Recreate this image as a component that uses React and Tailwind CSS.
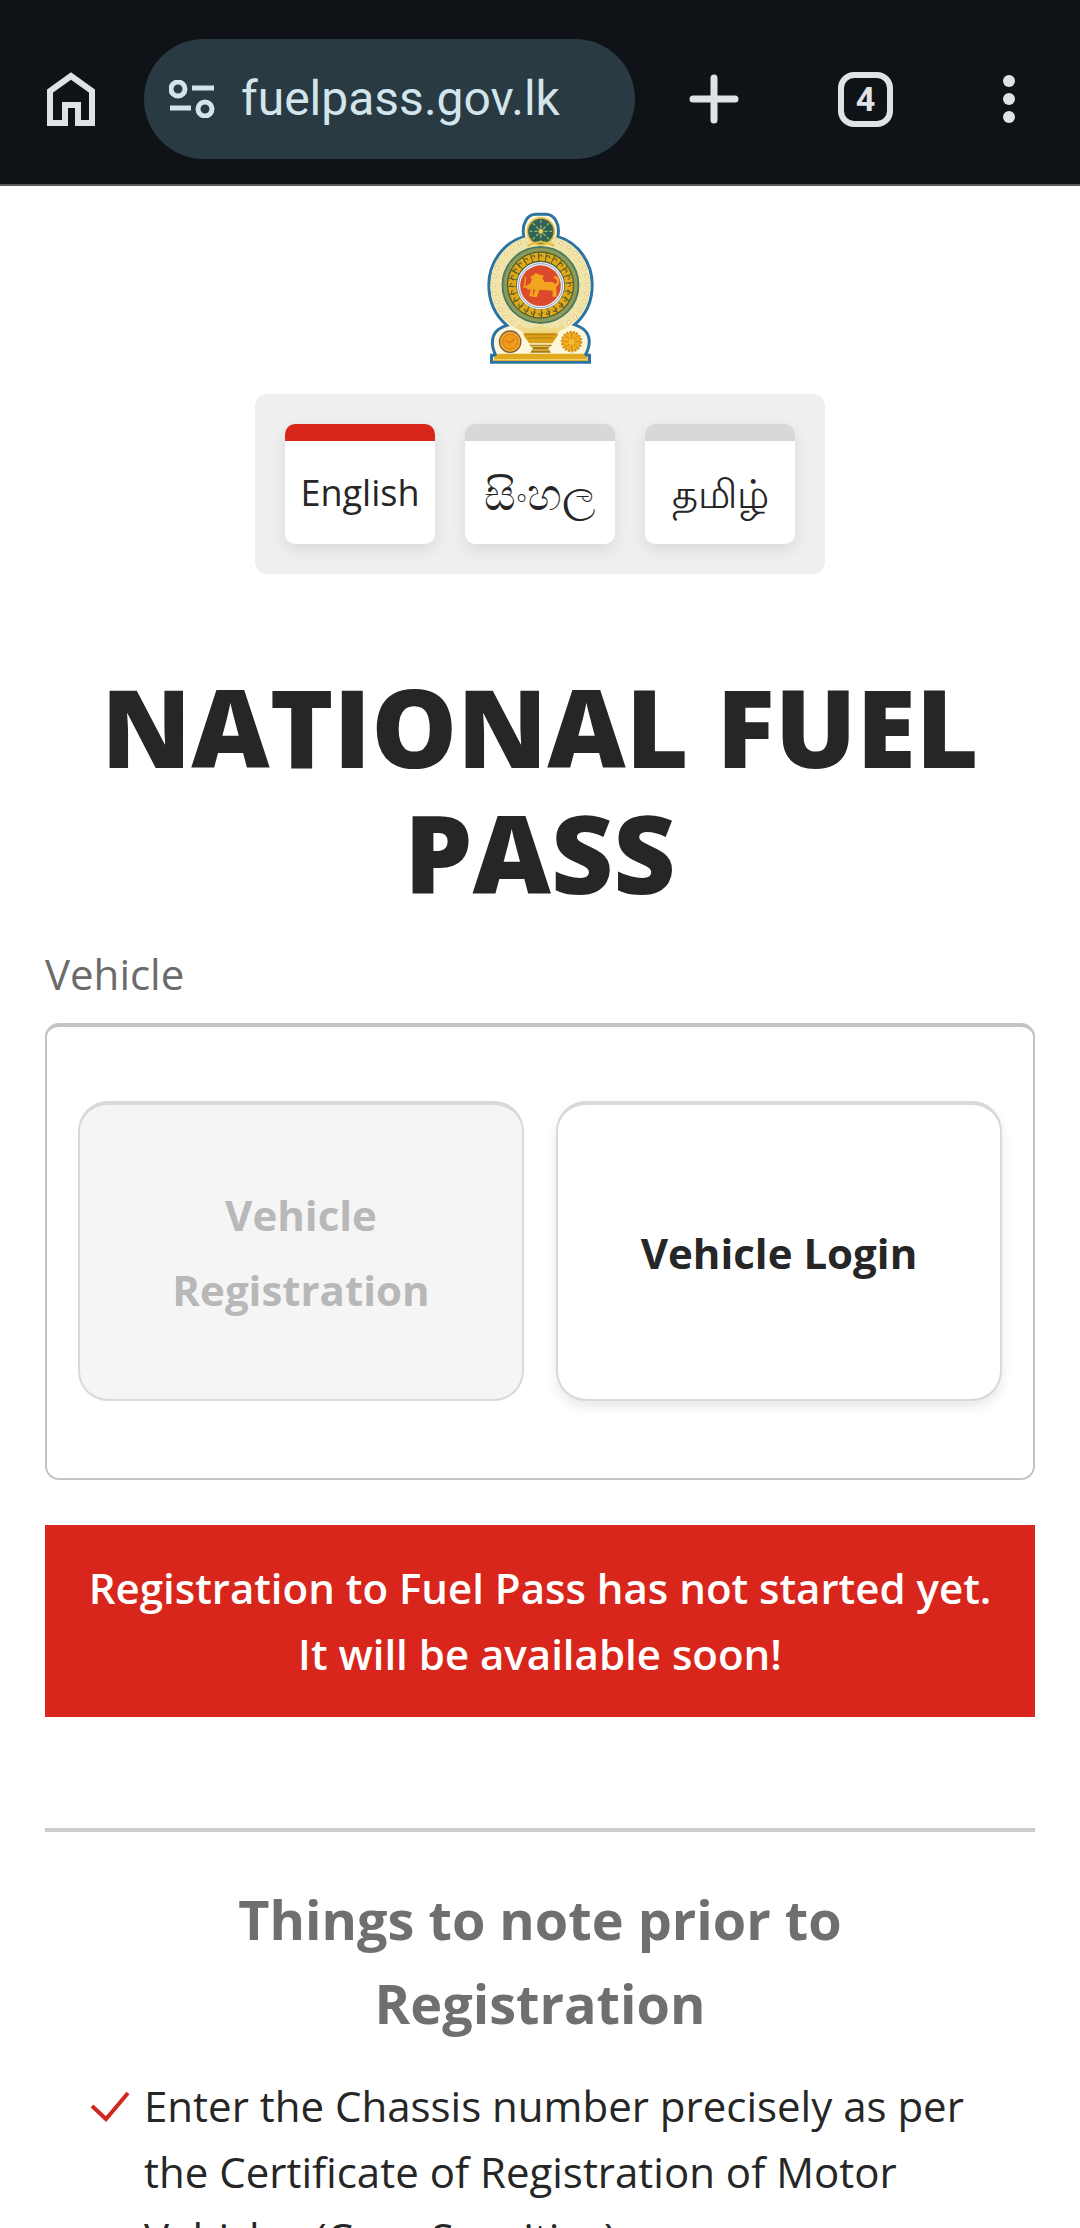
import React from "react";

const beads = (count, radius) =>
  Array.from({ length: count }, (_, i) => {
    const a = (i / count) * Math.PI * 2;
    return [210 + Math.cos(a) * radius, 255 + Math.sin(a) * radius, (i * 360) / count];
  });

function HomeIcon() {
  return (
    <svg viewBox="0 0 48 54" className="h-[54px] w-12" fill="none" stroke="#e0e3e6" strokeWidth="6" aria-hidden="true">
      <path d="M3 51V19L24 4L45 19V51H31V33H18V51Z" />
    </svg>
  );
}

function SiteIcon() {
  return (
    <svg viewBox="0 0 46 38" className="h-[38px] w-[46px] shrink-0" fill="none" stroke="#d3e5ec" strokeWidth="5" aria-hidden="true">
      <circle cx="9" cy="9" r="7" />
      <path d="M23 8H45M1 28H22" />
      <circle cx="36" cy="29" r="7" />
    </svg>
  );
}

function PlusIcon() {
  return (
    <svg viewBox="0 0 50 50" className="size-[50px]" stroke="#e0e3e6" strokeWidth="7" strokeLinecap="round" aria-hidden="true">
      <path d="M4 25H46M25 4V46" />
    </svg>
  );
}

function MenuIcon() {
  return (
    <svg viewBox="0 0 12 48" className="h-12 w-3" fill="#e0e3e6" aria-hidden="true">
      <circle cx="6" cy="6" r="6" />
      <circle cx="6" cy="24" r="6" />
      <circle cx="6" cy="42" r="6" />
    </svg>
  );
}

function CheckIcon() {
  return (
    <svg viewBox="0 0 40 32" className="mt-[18px] h-8 w-10 shrink-0" fill="none" stroke="#cf2a20" strokeWidth="4" aria-hidden="true">
      <path d="M2 15L16 28L38 2" />
    </svg>
  );
}

function Emblem() {
  return (
    <svg viewBox="50 36 320 456" className="h-[152px] w-[107px]" role="img" aria-label="Emblem of Sri Lanka">
      <path
        d="M160 110C152 70 172 43 196 43H226C250 43 270 70 262 110C325 128 365 190 365 255C365 305 346 345 312 374C345 385 358 402 356 430C355 445 350 455 344 466H357V487H63V466H76C68 450 64 440 66 425C66 400 80 385 109 376C73 345 55 305 55 255C55 190 97 128 160 110Z"
        fill="#fdf6d8"
        stroke="#2a73a3"
        strokeWidth="9"
      />
      <circle cx="210" cy="255" r="134" fill="none" stroke="#f1e4a8" strokeWidth="32" />
      {beads(34, 141).map(([x, y, r]) => (
        <ellipse key={r} cx={x} cy={y} rx="7" ry="4" fill="#fff8dd" stroke="#d9b869" strokeWidth="2" transform={`rotate(${r + 40} ${x} ${y})`} />
      ))}
      {beads(30, 126).map(([x, y, r]) => (
        <ellipse key={r} cx={x} cy={y} rx="5" ry="3" fill="#fbf0bd" stroke="#e2c676" strokeWidth="1" transform={`rotate(${r - 40} ${x} ${y})`} />
      ))}
      <circle cx="210" cy="255" r="114" fill="#8f9a58" stroke="#4d7d5e" strokeWidth="6" />
      <circle cx="210" cy="255" r="101" fill="#4d6233" />
      <circle cx="210" cy="255" r="85" fill="none" stroke="#e3a91b" strokeWidth="24" strokeDasharray="19 3" />
      {beads(24, 86).map(([x, y, r]) => (
        <path key={r} d={`M${x - 6} ${y + 5}q0 -10 7 -10q6 2 3 7`} fill="none" stroke="#5c5d20" strokeWidth="3" transform={`rotate(${r + 90} ${x} ${y})`} />
      ))}
      <circle cx="210" cy="257" r="71" fill="#eef1f5" />
      <circle cx="210" cy="257" r="66" fill="none" stroke="#8aa3c9" strokeWidth="3" />
      <circle cx="210" cy="257" r="61" fill="#db4a2a" />
      <path
        d="M176 288L181 266L172 270L166 258L180 250L184 236L178 231L188 226L196 219L207 224L221 227L215 234L222 246L245 246L254 252C266 247 258 235 249 234L253 228C269 230 272 249 257 261L259 290H246L247 272L228 271L207 269L199 291H187L194 270L188 268L187 290Z"
        fill="#f1a51e"
      />
      <path d="M165 230L162 262M158 261H169" stroke="#f1a51e" strokeWidth="4" />
      <circle cx="211" cy="94" r="43" fill="#e8bd43" />
      <circle cx="211" cy="94" r="38" fill="#2f6357" />
      <g stroke="#9bb765" strokeWidth="4">
        <path d="M211 60V128M177 94H245M187 70L235 118M235 70L187 118" />
      </g>
      <circle cx="211" cy="94" r="23" fill="none" stroke="#2f6357" strokeWidth="6" />
      <circle cx="211" cy="94" r="9" fill="#e5cf5c" stroke="#2f6357" strokeWidth="3" />
      <path d="M171 137Q210 116 251 137" fill="none" stroke="#e6bd3c" strokeWidth="7" />
      <path d="M140 374Q178 394 210 376Q242 394 281 374L266 397H154Z" fill="#efd987" />
      <circle cx="119" cy="425" r="32" fill="#efac24" stroke="#865e45" strokeWidth="4" />
      <circle cx="119" cy="425" r="23" fill="#f3991c" stroke="#cf7b17" strokeWidth="3" />
      <path d="M105 420Q119 438 131 416" fill="none" stroke="#d77c18" strokeWidth="4" />
      <circle cx="303" cy="425" r="29" fill="#f0ac20" stroke="#cf9222" strokeWidth="7" strokeDasharray="6 4" />
      <g stroke="#cc8a1a" strokeWidth="3">
        <path d="M303 400V450M278 425H328M285 407L321 443M321 407L285 443" />
      </g>
      <circle cx="303" cy="425" r="9" fill="#f6bb33" />
      <path d="M158 398H262V405C257 416 248 423 246 430H176C174 422 161 415 158 398Z" fill="#dba21a" />
      <path d="M164 404H257M171 414H250" stroke="#b27e15" strokeWidth="3" />
      <path d="M176 434H246L233 445L241 458H179L188 445Z" fill="#a77a17" />
      <path d="M184 439H238M186 450H236" stroke="#f4d25e" strokeWidth="3" />
      <path d="M84 461H338L351 474V483H70V474Z" fill="#e0a91e" />
      <path d="M72 479H349" stroke="#f7d978" strokeWidth="3" />
    </svg>
  );
}

function LanguageButton({ active, lang, textSize, children }) {
  return (
    <button
      type="button"
      lang={lang}
      aria-pressed={active}
      className="flex h-[120px] w-[150px] flex-col overflow-hidden rounded-[10px] bg-white text-[#262626] shadow-[0_6px_16px_rgba(0,0,0,0.09)]"
    >
      <span className={active ? "h-[17px] w-full shrink-0 bg-[#d9261c]" : "h-[17px] w-full shrink-0 bg-[#d8d8d8]"} />
      <span className={`flex w-full grow items-center justify-center ${textSize}`}>{children}</span>
    </button>
  );
}

export default function App() {
  return (
    <div className="min-h-screen bg-white font-['Open_Sans','Noto_Sans',sans-serif] text-[#262626]">
      <header className="flex h-[186px] items-center border-b-2 border-[#5a5c5c] bg-[#0f1216] pt-[14px] pr-[65px] pl-[47px]">
        <button type="button" aria-label="Home">
          <HomeIcon />
        </button>
        <a href="#site" className="mr-[54px] ml-[49px] flex h-[120px] grow items-center gap-[26px] rounded-full bg-[#293a42] pl-[25px]">
          <SiteIcon />
          <span className="font-['Roboto',sans-serif] text-[48px] text-[#d3e5ec]">fuelpass.gov.lk</span>
        </a>
        <button type="button" aria-label="New tab">
          <PlusIcon />
        </button>
        <button
          type="button"
          aria-label="4 open tabs"
          className="mr-[110px] ml-[99px] flex size-[55px] items-center justify-center rounded-2xl border-[6px] border-[#e0e3e6] font-['Roboto',sans-serif] text-[34px] font-bold text-[#e0e3e6]"
        >
          4
        </button>
        <button type="button" aria-label="More options">
          <MenuIcon />
        </button>
      </header>

      <main className="px-[45px]">
        <div className="flex flex-col items-center pt-[26px]">
          <Emblem />
          <div className="mt-[30px] flex gap-[30px] rounded-xl bg-[#efefef] p-[30px]">
            <LanguageButton active lang="en" textSize="text-[36px]">English</LanguageButton>
            <LanguageButton active={false} lang="si" textSize="text-[44px]">සිංහල</LanguageButton>
            <LanguageButton active={false} lang="ta" textSize="text-[40px]">தமிழ்</LanguageButton>
          </div>
        </div>

        <h1 className="mt-[90px] text-center text-[108px] leading-[126px] font-extrabold">NATIONAL FUEL PASS</h1>

        <section>
          <h2 id="vehicle" className="mt-[25px] text-[42px] leading-[66px] text-[#6b6b6b]">Vehicle</h2>
          <div
            aria-labelledby="vehicle"
            role="group"
            className="mt-4 grid grid-cols-2 gap-8 rounded-[14px] border-2 border-t-4 border-[#c4c4c4] px-[31px] pt-[74px] pb-[77px]"
          >
            <button
              type="button"
              disabled
              className="h-[300px] rounded-[30px] border-2 border-t-4 border-[#d9d9d9] bg-[#f5f5f5] px-12 text-[42px] leading-[75px] font-bold text-[#b8b8b8]"
            >
              Vehicle Registration
            </button>
            <button
              type="button"
              className="h-[300px] rounded-[30px] border-2 border-t-4 border-[#d9d9d9] bg-white px-12 text-[42px] leading-[75px] font-bold shadow-[0_6px_12px_rgba(0,0,0,0.09)]"
            >
              Vehicle Login
            </button>
          </div>
        </section>

        <p role="alert" className="mt-[45px] bg-[#d9261c] px-8 py-[30px] text-center text-[42px] leading-[66px] font-semibold text-white">
          Registration to Fuel Pass has not started yet. It will be available soon!
        </p>

        <section className="mt-[111px] border-t-4 border-[#cccccc] pt-[45px]">
          <h2 className="mx-auto max-w-[700px] text-center text-[54px] leading-[84px] font-bold text-[#6f6f6f]">
            Things to note prior to Registration
          </h2>
          <ul className="mt-7 pr-[60px] pl-[45px] text-[42px] leading-[66px]">
            <li className="flex gap-[14px]">
              <CheckIcon />
              <span>Enter the Chassis number precisely as per the Certificate of Registration of Motor Vehicles (Case Sensitive)</span>
            </li>
          </ul>
        </section>
      </main>
    </div>
  );
}
